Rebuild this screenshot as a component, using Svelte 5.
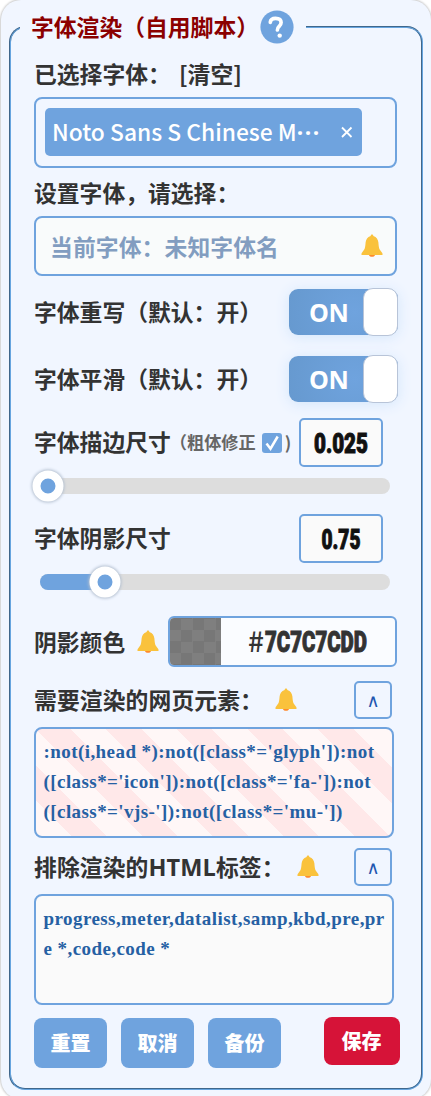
<script>
	let switches = [
		{label: '字体重写（默认：开）', on: true},
		{label: '字体平滑（默认：开）', on: true}
	];

	let stroke = 0.025;
	let shadow = 0.75;
	let fixBold = true;
	let color = '7C7C7CDD';

	// thumb centre, in percent of the track
	let strokePos = 2.4;
	let shadowPos = 18.7;

	let includes = ":not(i,head *):not([class*='glyph']):not\n([class*='icon']):not([class*='fa-']):not\n([class*='vjs-']):not([class*='mu-'])";
	let excludes = 'progress,meter,datalist,samp,kbd,pre,pr\ne *,code,code *';
</script>

{#snippet bell()}
	<svg class="bell" viewBox="0 0 22 24" width="22" height="24">
		<path d="M7.800 20.500h6.400c-.3 1.600-1.500 2.300-3.200 2.300s-2.900-.7-3.200-2.300z" fill="#ff8a2c" />
		<path d="M11 .4c.9 0 1.300.7 1.400 1.600 3.200 1 4.700 3.500 5 6.600.4 5 .6 6.800 3.300 9.600.5.5.8 1 .8 1.600v1.100H.5v-1.100c0-.6.3-1.100.8-1.600 2.700-2.800 2.900-4.600 3.300-9.600.3-3.100 1.800-5.600 5-6.600.1-.9.5-1.600 1.400-1.600z" fill="#fac23c" />
	</svg>
{/snippet}

<div class="panel">
	<fieldset>
		<legend>
			<span>字体渲染（自用脚本）</span>
			<svg class="help" viewBox="0 0 34 34" width="34" height="34">
				<circle cx="17" cy="17" r="16.600" fill="#6fa3de" />
				<path d="M10.300 12.300c.3-2.500 2.400-3.900 5.200-3.900 3.400 0 5.600 1.500 5.600 4.200 0 4-4 3.700-3.700 7.400" fill="none" stroke="#fff" stroke-width="3.700" stroke-linecap="round" />
				<circle cx="19.700" cy="25.600" r="2.200" fill="#fff" />
			</svg>
		</legend>

		<div class="label first">已选择字体： <span class="clear">[清空]</span></div>
		<div class="selected">
			<div class="chip"><span>Noto Sans S Chinese M<span class="dots">···</span></span>
				<svg viewBox="0 0 12 12" width="12" height="12"><path d="M1 1.500l9.500 9.500M10.500 1.500L1 11" stroke="#fff" stroke-width="1.800" /></svg>
			</div>
		</div>

		<div class="label second">设置字体，请选择：</div>
		<div class="search">
			<span>当前字体：未知字体名</span>
			{@render bell()}
		</div>

		<div class="switches">
			{#each switches as item}
				<div class="row switch-row">
					<span>{item.label}</span>
					<button class="switch" on:click={() => {item.on = !item.on}}>
						<span class="state">{item.on ? 'ON' : 'OFF'}</span>
						<span class="knob"></span>
					</button>
				</div>
			{/each}
		</div>

		<div class="row size-row">
			<span>字体描边尺寸</span>
			<span class="fix"><span>（粗体修正</span>
				<button class="check" aria-label="粗体修正" on:click={() => {fixBold = !fixBold}}>
					{#if fixBold}
						<svg viewBox="0 0 20 20" width="20" height="20"><path d="M4.500 10.500l4 5.200L15.700 3.500" fill="none" stroke="#fff" stroke-width="2.500" /></svg>
					{/if}
				</button><span class="close">)</span></span>
			<div class="number">
				<svg width="80" height="45"><text x="40" y="33" text-anchor="middle" textLength="54" lengthAdjust="spacingAndGlyphs">{stroke}</text></svg>
			</div>
		</div>
		<div class="slider">
			<div class="track"><div class="thumb" style="left: {strokePos}%"></div></div>
		</div>

		<div class="row size-row shadow-row">
			<span>字体阴影尺寸</span>
			<div class="number">
				<svg width="80" height="45"><text x="40" y="33" text-anchor="middle" textLength="39" lengthAdjust="spacingAndGlyphs">{shadow}</text></svg>
			</div>
		</div>
		<div class="slider">
			<div class="track">
				<div class="fill" style="width: {shadowPos}%"></div>
				<div class="thumb" style="left: {shadowPos}%"></div>
			</div>
		</div>

		<div class="row color-row">
			<span>阴影颜色</span>
			{@render bell()}
			<div class="color">
				<div class="swatch"></div>
				<svg width="174" height="47">
					<text class="hash" x="27" y="34">#</text>
					<text class="hex" x="44" y="34" textLength="102" lengthAdjust="spacingAndGlyphs">{color}</text>
				</svg>
			</div>
		</div>

		<div class="row area-row">
			<span>需要渲染的网页元素：</span>
			{@render bell()}
			<button class="fold">∧</button>
		</div>
		<div class="area striped">{includes}</div>

		<div class="row area-row next">
			<span>排除渲染的<span class="latin">HTML</span>标签：</span>
			{@render bell()}
			<button class="fold">∧</button>
		</div>
		<div class="area">{excludes}</div>

		<div class="buttons">
			<button>重置</button>
			<button>取消</button>
			<button>备份</button>
			<button class="save">保存</button>
		</div>
	</fieldset>
</div>

<style>
	:global(body) {
		height: 1096px;
		overflow: hidden;
		background: #fff;
	}

	.panel {
		box-sizing: border-box;
		width: 430px;
		height: 1099px;
		margin-left: 1px;
		padding: 10px 8px 0;
		border-radius: 20px;
		background: #f1f6ff;
		box-shadow: 0 0 2px 1px #ccc;
		font: bold 22.8px/30px "Noto Sans CJK SC", sans-serif;
		color: #333;
	}

	fieldset {
		box-sizing: border-box;
		display: block;
		width: 414px;
		height: 1080px;
		min-width: 0;
		margin: 0;
		padding: 0 23px;
		border: 2px groove #67a5df;
		border-radius: 16px;
	}

	legend {
		display: flex;
		align-items: center;
		box-sizing: border-box;
		width: 286px;
		height: 34px;
		margin-left: -14px;
		padding: 0 0 0 11px;
		color: #8b0000;
		white-space: nowrap;
	}

	.help {
		flex: none;
		margin-left: 1px;
	}

	button {
		padding: 0;
		border: 0;
		font: inherit;
	}

	svg {
		display: block;
		flex: none;
		overflow: visible;
	}

	.label {
		white-space: nowrap;
	}

	.first {
		height: 38px;
		padding-top: 15px;
	}

	.clear {
		margin-left: 3px;
	}

	.second {
		height: 38px;
		padding-top: 10px;
	}

	.selected {
		box-sizing: border-box;
		width: 363px;
		height: 71px;
		padding: 9px;
		border: 2px solid #6fa3de;
		border-radius: 8px;
	}

	.chip {
		display: flex;
		align-items: center;
		justify-content: space-between;
		box-sizing: border-box;
		width: 317px;
		height: 48px;
		padding: 0 9px 0 7px;
		border-radius: 5px;
		background: #6fa3de;
		color: #fff;
		font-weight: 500;
		white-space: nowrap;
	}

	.dots {
		font-family: "Open Sans", sans-serif;
		font-weight: 700;
		letter-spacing: 1.500px;
	}

	.search {
		display: flex;
		align-items: center;
		justify-content: space-between;
		box-sizing: border-box;
		width: 363px;
		height: 60px;
		padding: 0 12px 0 14px;
		border: 2px solid #6fa3de;
		border-radius: 8px;
		background: #f9fbfb;
		color: #829dc0;
	}

	.search span {
		padding-top: 1px;
		letter-spacing: .1px;
	}

	.switches {
		padding: 2px 0 1px;
	}

	.row {
		display: flex;
		align-items: center;
		width: 363px;
		white-space: nowrap;
	}

	.switch-row {
		justify-content: space-between;
		height: 67px;
	}

	.switch {
		display: flex;
		align-items: center;
		justify-content: space-between;
		width: 109px;
		height: 46px;
		margin-right: -1px;
		border-radius: 9px;
		background: radial-gradient(circle at 60% 50%, #6fa3de, #6699cf);
		box-shadow: 0 2px 14px #d3e6fb;
		color: #fff;
		font: bold 25px "Open Sans", sans-serif;
	}

	.state {
		padding-left: 20px;
		letter-spacing: -.5px;
	}

	.knob {
		box-sizing: border-box;
		width: 35px;
		height: 48px;
		border: 1px solid #b8c4d8;
		border-radius: 10px;
		background: #fff;
	}

	.size-row {
		height: 49px;
		margin-top: 5px;
	}

	.size-row > span {
		padding-bottom: 2px;
	}

	.shadow-row {
		margin-top: 9px;
	}

	.fix {
		display: flex;
		align-items: center;
		margin-left: -1px;
		color: #666;
		font-size: 17.200px;
	}

	.check {
		width: 20px;
		height: 20px;
		margin: 2px 0 0 6px;
		border-radius: 3px;
		background: #6fa3de;
	}

	.close {
		margin-left: 3px;
	}

	.number {
		box-sizing: border-box;
		width: 84px;
		height: 49px;
		margin: 0 14px 0 auto;
		border: 2px solid #6fa3de;
		border-radius: 5px;
		background: #fafafa;
	}

	.number text {
		font: 900 27px Roboto, sans-serif;
		fill: #111;
		stroke: #111;
		stroke-width: 1;
	}

	.slider {
		display: flex;
		align-items: center;
		height: 38px;
		padding-left: 6px;
	}

	.track {
		position: relative;
		width: 350px;
		height: 16px;
		border-radius: 8px;
		background: #ddd;
	}

	.fill {
		height: 16px;
		border-radius: 8px 0 0 8px;
		background: #6fa3de;
	}

	.thumb {
		position: absolute;
		top: 50%;
		box-sizing: border-box;
		width: 31px;
		height: 31px;
		border: 8px solid #fff;
		border-radius: 50%;
		background: #6fa3de;
		box-shadow: 0 0 3px 1px #b4c0d0;
		transform: translate(-50%, -50%);
	}

	.color-row {
		height: 51px;
		margin-top: 15px;
	}

	.color-row :global(.bell) {
		margin-left: 12px;
	}

	.color {
		display: flex;
		box-sizing: border-box;
		width: 229px;
		height: 51px;
		margin-left: auto;
		border: 2px solid #6fa3de;
		border-radius: 6px;
		background: #fafcff;
	}

	.swatch {
		width: 51px;
		border-radius: 4px 0 0 4px;
		background: repeating-conic-gradient(#7f7f7f 0 25%, #777 0 50%) 11px 12px / 23px 23px;
	}

	.hash {
		font: 500 28px "Noto Sans CJK SC", sans-serif;
		fill: #333;
	}

	.hex {
		font: 900 29px Roboto, sans-serif;
		fill: #333;
		stroke: #333;
		stroke-width: 1;
	}

	.area-row {
		height: 38px;
		margin-top: 14px;
	}

	.area-row > span {
		letter-spacing: .1px;
	}

	.latin {
		font-family: "Open Sans", sans-serif;
		font-size: 23.500px;
	}

	.area-row.next {
		margin-top: 10px;
	}

	.area-row :global(.bell) {
		margin-left: 12px;
	}

	.fold {
		box-sizing: border-box;
		width: 38px;
		height: 38px;
		margin: 0 5px 0 auto;
		border: 2px solid #6fa3de;
		border-radius: 5px;
		background: transparent;
		color: #1f56b0;
		font: 18px/36px "DejaVu Sans", sans-serif;
	}

	.area {
		box-sizing: border-box;
		width: 360px;
		height: 111px;
		margin-top: 8px;
		padding: 8px 7.500px;
		border: 2px solid #6fa3de;
		border-radius: 8px;
		background: #fafafa;
		color: #2560a3;
		font: bold 19px/30px "Liberation Serif", serif;
		letter-spacing: .43px;
		white-space: pre;
	}

	.striped {
		background: repeating-linear-gradient(45deg, #fff7f7 0 25px, #ffe8e9 25px 50px);
	}

	.buttons {
		display: flex;
		gap: 14px;
		width: 365.500px;
		margin-top: 12px;
	}

	.buttons button {
		width: 73px;
		height: 50px;
		margin-top: 1px;
		border-radius: 8px;
		background: #6fa3de;
		color: #fff;
		font: 900 20px/50px "Noto Sans CJK SC", sans-serif;
	}

	.buttons .save {
		width: 76px;
		height: 48px;
		margin: 0 0 0 auto;
		background: #d61338;
		line-height: 48px;
	}
</style>
